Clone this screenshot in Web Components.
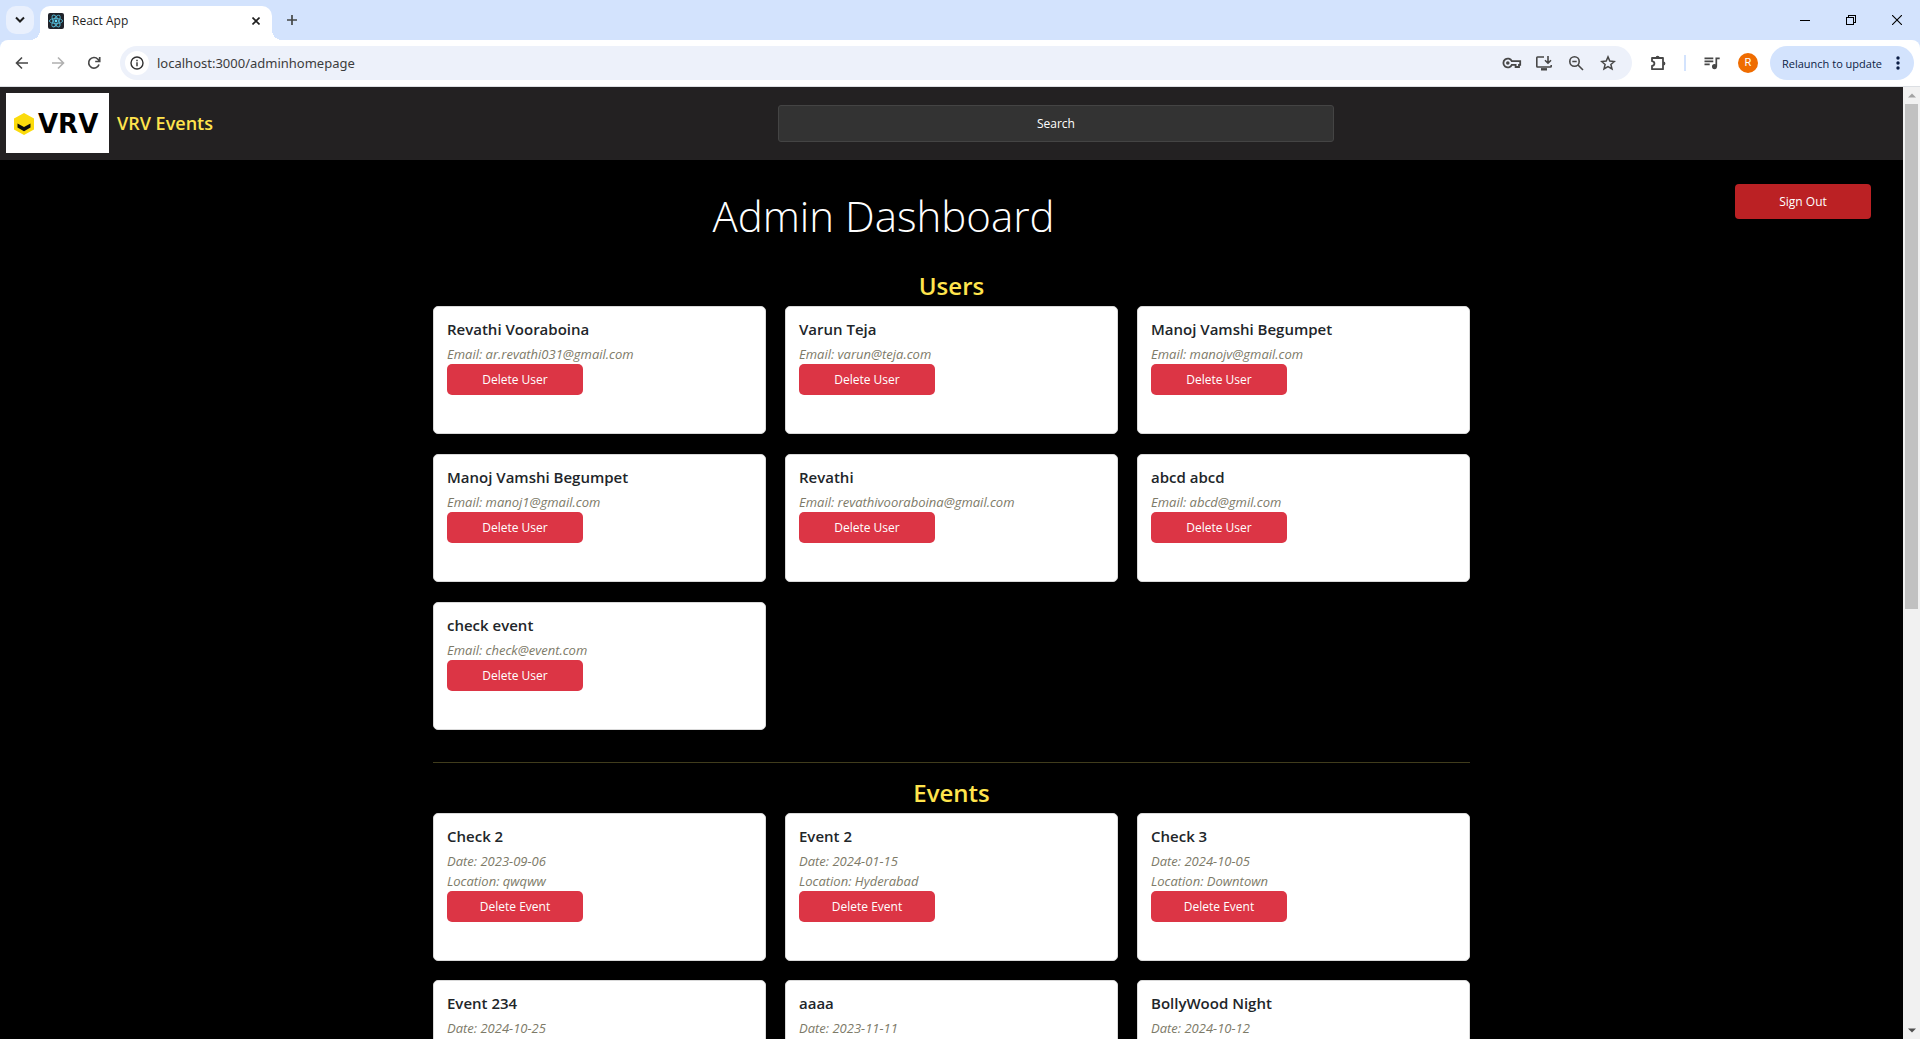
<!DOCTYPE html>
<html lang="en">
<head>
<meta charset="utf-8">
<title>React App</title>
<style>
  html, body { margin: 0; height: 100%; }
  body { font-family: "Open Sans", "Noto Sans", sans-serif; font-size: 12px; background: #000; }
</style>
</head>
<body>
<browser-window>
  <browser-tabs slot="chrome"></browser-tabs>
  <browser-toolbar slot="chrome"></browser-toolbar>
  <admin-page></admin-page>
</browser-window>

<script>
const define = (name, html, setup) => {
  const template = document.createElement('template');
  template.innerHTML = `<style>:host,*{box-sizing:border-box}button,input{font:inherit;margin:0}
    button{border:0;background:none;padding:0;color:inherit}svg{display:block}</style>` + html;
  customElements.define(name, class extends HTMLElement {
    connectedCallback() {
      if (this.shadowRoot) return;
      this.attachShadow({ mode: 'open' }).append(template.content.cloneNode(true));
      if (setup) setup(this, this.shadowRoot);
    }
  });
};

define('browser-window', `
<style>
  :host { display: flex; flex-direction: column; height: 100vh; overflow: hidden; background: #d3e3fd; }
  .view { flex: 1; min-height: 0; display: flex; }
  .page { flex: 1; min-width: 0; overflow-x: hidden; overflow-y: auto; scrollbar-width: none; }
</style>
<slot name="chrome"></slot>
<div class="view"><div class="page"><slot></slot></div><page-scrollbar></page-scrollbar></div>`);

define('page-scrollbar', `
<style>
  :host { display: flex; flex-direction: column; align-items: center; width: 17px; background: #f1f1f1; }
  .cap { height: 17px; display: grid; place-items: center; }
  .track { flex: 1; align-self: stretch; padding: 0 2px; }
  .thumb { height: 55%; background: #c1c1c1; }
</style>
<div class="cap"><svg width="8" height="5"><path d="M0 4.5 4 .5l4 4z" fill="#a3a3a3"/></svg></div>
<div class="track"><div class="thumb"></div></div>
<div class="cap"><svg width="8" height="5"><path d="M0 .5 4 4.5l4-4z" fill="#505050"/></svg></div>`);

define('browser-tabs', `
<style>
  :host { display: flex; align-items: flex-end; height: 40px; padding-left: 6px; color: #1f1f1f; }
  button { display: grid; place-items: center; }
  .list { width: 28px; height: 28px; border-radius: 10px; background: #e9f0fd; margin: 0 6px 6px 0; }
  .tab { position: relative; display: flex; align-items: center; gap: 8px; width: 232px; height: 34px; padding: 0 8px 4px;
         background: #fff; border-radius: 10px 10px 0 0; }
  .tab::before, .tab::after { content: ""; position: absolute; bottom: 0; width: 10px; height: 10px; }
  .tab::before { left: -10px; background: radial-gradient(circle at 0 0, transparent 10px, #fff 10px); }
  .tab::after { right: -10px; background: radial-gradient(circle at 100% 0, transparent 10px, #fff 10px); }
  .title { flex: 1; line-height: 16px; }
  .close { width: 16px; height: 16px; }
  .new { width: 28px; height: 28px; margin: 0 0 6px 6px; }
  .win { display: flex; margin-left: auto; height: 40px; }
  .win button { width: 46px; height: 40px; }
</style>
<button class="list" aria-label="Search tabs"><svg width="10" height="8" fill="none" stroke="#1f1f1f" stroke-width="2"><path d="M1 1.5l4 4 4-4"/></svg></button>
<div class="tab">
  <svg width="16" height="16"><rect width="16" height="16" rx="2" fill="#20232a"/>
    <g fill="none" stroke="#53b5d0" stroke-width=".9"><ellipse cx="8" cy="8" rx="6.6" ry="2.6"/><ellipse cx="8" cy="8" rx="6.6" ry="2.6" transform="rotate(60 8 8)"/><ellipse cx="8" cy="8" rx="6.6" ry="2.6" transform="rotate(120 8 8)"/></g><circle cx="8" cy="8" r="1.4" fill="#61dafb"/></svg>
  <span class="title">React App</span>
  <button class="close" aria-label="Close tab"><svg width="8" height="8" stroke="#1f1f1f" stroke-width="1.6"><path d="M.5.5l7 7M7.5.5l-7 7"/></svg></button>
</div>
<button class="new" aria-label="New tab"><svg width="10" height="10" stroke="#444746" stroke-width="1.7"><path d="M5 0v10M0 5h10"/></svg></button>
<div class="win">
  <button aria-label="Minimize"><svg width="10" height="10" shape-rendering="crispEdges"><path d="M0 5.5h10" stroke="#000"/></svg></button>
  <button aria-label="Restore"><svg width="10" height="10" fill="none" stroke="#000" shape-rendering="crispEdges"><path d="M.5 2.5h7v7h-7zM2.5 2.5v-2h7v7h-2"/></svg></button>
  <button aria-label="Close"><svg width="10" height="10" stroke="#000" stroke-width="1.1"><path d="M0 0l10 10M10 0L0 10"/></svg></button>
</div>`);

define('browser-toolbar', `
<style>
  :host { display: flex; align-items: center; gap: 12px; height: 47px; padding: 0 6px 0 8px; background: #fff;
          border-radius: 8px 8px 0 0; border-bottom: 1px solid #dcdfe3; color: #474747; }
  button { display: grid; place-items: center; }
  .nav { display: flex; gap: 8px; }
  .nav button, .tool { width: 28px; height: 28px; }
  .omni { flex: 1; display: flex; align-items: center; gap: 8px; height: 34px; padding: 0 12px 0 5px; border-radius: 17px; background: #edf1fa; }
  .omni button { width: 24px; height: 24px; }
  .info { border-radius: 12px; background: #fff; }
  input { flex: 1; min-width: 0; border: 0; padding: 0; outline: 0; background: none; font-family: "Noto Sans", sans-serif; font-size: 13px; line-height: 20px; color: #3c3c3c; }
  .rule { width: 2px; height: 16px; background: #d3e3fd; }
  .avatar { width: 20px; height: 20px; border-radius: 10px; background: #ef6c00; color: #fff; font: 11px/20px Roboto, sans-serif; }
  .relaunch { display: flex; align-items: center; justify-content: space-between; width: 144px; height: 34px; padding: 0 14px 0 12px; border-radius: 17px; background: #d3e3fd; color: #0b1d45; font-size: 11px; }
</style>
<div class="nav">
  <button aria-label="Back"><svg width="14" height="14" fill="none" stroke="#474747" stroke-width="1.6"><path d="M13 7H2M7 1.500L1.500 7 7 12.500"/></svg></button>
  <button aria-label="Forward"><svg width="14" height="14" fill="none" stroke="#b0b0b0" stroke-width="1.6"><path d="M1 7h11M7 1.500L12.500 7 7 12.500"/></svg></button>
  <button aria-label="Reload"><svg width="14" height="14" fill="none" stroke="#474747" stroke-width="1.7"><path d="M12 8.500A5.300 5.300 0 1 1 10.900 3.200L12.500 5M12.700 1v4.500H8.200"/></svg></button>
</div>
<div class="omni">
  <button class="info" aria-label="Site information"><svg width="14" height="14" fill="none" stroke="#303030" stroke-width="1.4"><circle cx="7" cy="7" r="6"/><path d="M7 6.200v4M7 3.700v1.500"/></svg></button>
  <input type="text" value="localhost:3000/adminhomepage" aria-label="Address">
  <button aria-label="Passwords"><svg width="20" height="14" fill="none" stroke="#474747" stroke-width="1.8"><path d="M9.800 5.200H18.200V8.800H17V11H13.600V8.800H9.800A4.400 4.400 0 1 1 9.800 5.200z"/><circle cx="5.800" cy="7" r="1.800" fill="#474747" stroke="none"/></svg></button>
  <button aria-label="Install"><svg width="18" height="16" fill="none" stroke="#474747" stroke-width="1.6"><path d="M9 2H2.500Q1.800 2 1.800 2.800V11.200Q1.800 12 2.500 12H15.500Q16.200 12 16.200 11.200V10M13 1V8M10 5.200L13 8.200 16 5.200"/><path d="M6 14.300h6" stroke-width="2.4"/></svg></button>
  <button aria-label="Zoom"><svg width="16" height="16" fill="none" stroke="#474747" stroke-width="1.6"><circle cx="6.500" cy="6.500" r="4.700"/><path d="M4.300 6.500h4.400M10 10l5 5"/></svg></button>
  <button aria-label="Bookmark"><svg width="16" height="16" fill="none" stroke="#474747" stroke-width="1.5"><path d="M8 1.900l1.800 4.200 4.600.4-3.500 3 1.100 4.500L8 11.600 4 14l1.100-4.500-3.500-3 4.600-.4z"/></svg></button>
</div>
<button class="tool" aria-label="Extensions"><svg width="18" height="18"><path d="M3 4H14V15.200H3V12Q5.400 11.600 5.400 9.600T3 7.200z" fill="none" stroke="#474747" stroke-width="1.800" stroke-linejoin="round"/><path d="M6.600 3.700a2 2 0 0 1 4 0zM14.400 7.600a2 2 0 0 1 0 4z" fill="#474747"/></svg></button>
<div class="rule"></div>
<button class="tool" aria-label="Media controls"><svg width="16" height="14" fill="none" stroke="#474747" stroke-width="1.700"><path d="M.5 2.300h8.800M.5 5.300h8.800M.5 8.300h5.200M12.300 10.500V2.300h3.400"/><circle cx="10.500" cy="10.600" r="1.700" fill="#474747"/></svg></button>
<button class="avatar">R</button>
<button class="relaunch"><span>Relaunch to update</span><svg width="4" height="14" fill="#0b1d45"><circle cx="2" cy="2" r="1.700"/><circle cx="2" cy="7" r="1.700"/><circle cx="2" cy="12" r="1.700"/></svg></button>`);

define('vrv-logo', `
<style>
  :host { display: flex; align-items: center; gap: 4px; width: 103px; height: 60px; padding: 2px 0 0 8px; background: #fff; }
  span { font: bold 26px/56px "DejaVu Sans", sans-serif; font-kerning: none; color: #000; }
</style>
<svg width="20" height="22" aria-hidden="true">
  <path d="M10 0L20 5.500V16.500L10 22 0 16.500V5.500z" fill="#fbdb0c"/>
  <path d="M3.500 10.500L10 14l6.500-3.500v4L10 18.300l-6.500-3.800z" fill="#0d0d0d"/>
</svg><span>VRV</span>`);

define('site-header', `
<style>
  :host { display: flex; align-items: center; gap: 8px; padding: 6px 12px 7px 6px; background: #232122; }
  a { color: #ffe44d; font-size: 18px; line-height: 24px; font-weight: 600; text-decoration: none; }
  form { flex: 1; display: flex; justify-content: center; margin: 0; }
  input { width: 33.333%; height: 37px; padding: 0 10px; border: 1px solid #444; border-radius: 3px; background: #333; color: #fff; text-align: center; font-size: 12px; }
  input::placeholder { color: #fff; }
</style>
<vrv-logo></vrv-logo><a href="#">VRV Events</a>
<form><input type="text" placeholder="Search" aria-label="Search"></form>`);

define('entry-card', `
<style>
  :host { display: block; padding: 12px 13px 38px; background: #fff; border: 1px solid #d9d9d9; border-radius: 5px; }
  h3 { margin: 0 0 5px; font-size: 15px; line-height: 20px; font-weight: 600; color: #212529; }
  .info { min-height: var(--info-height, 20px); font-size: 13px; line-height: 20px; font-style: italic; color: #7d7a68; }
  button { display: block; width: 136px; height: 31px; border-radius: 5px; background: #dc3545; color: #fff; font-size: 12px; }
</style>
<h3></h3><div class="info"><slot></slot></div><button type="button"></button>`,
(el, root) => {
  root.querySelector('h3').textContent = el.getAttribute('heading');
  root.querySelector('button').textContent = el.getAttribute('action');
});

define('card-section', `
<style>
  :host { display: block; }
  h2 { margin: 0; padding-bottom: 4px; font-size: 24px; line-height: 32px; font-weight: 600; text-align: center; color: #ffe44d; }
  .grid { display: grid; grid-template-columns: repeat(3, 1fr); gap: var(--row-gap, 20px) 19px; }
</style>
<h2></h2><div class="grid"><slot></slot></div>`,
(el, root) => { root.querySelector('h2').textContent = el.getAttribute('heading'); });

define('admin-page', `
<style>
  :host { display: block; background: #000; }
  .top { display: flex; align-items: flex-start; padding: 24px 32px 0; }
  h1 { flex: 1; margin: 0; font-size: 42px; line-height: 64px; font-weight: 300; text-align: center; color: #fff; }
  .out { width: 136px; height: 35px; border-radius: 4px; background: #bb2124; color: #fff; font-size: 12px; }
  main { max-width: 1037px; margin: 0 auto; padding-top: 22px; }
  hr { margin: 32px 0 14px; border: 0; border-top: 1px solid #403c1c; }
  .events { --row-gap: 19px; --info-height: 40px; }
  p { margin: 0; }
</style>
<site-header></site-header>
<div class="top"><h1>Admin Dashboard</h1><button class="out" type="button">Sign Out</button></div>
<main>
  <card-section heading="Users">
    <entry-card heading="Revathi Vooraboina" action="Delete User"><p>Email: ar.revathi031@gmail.com</p></entry-card>
    <entry-card heading="Varun Teja" action="Delete User"><p>Email: varun@teja.com</p></entry-card>
    <entry-card heading="Manoj Vamshi Begumpet" action="Delete User"><p>Email: manojv@gmail.com</p></entry-card>
    <entry-card heading="Manoj Vamshi Begumpet" action="Delete User"><p>Email: manoj1@gmail.com</p></entry-card>
    <entry-card heading="Revathi" action="Delete User"><p>Email: revathivooraboina@gmail.com</p></entry-card>
    <entry-card heading="abcd abcd" action="Delete User"><p>Email: abcd@gmil.com</p></entry-card>
    <entry-card heading="check event" action="Delete User"><p>Email: check@event.com</p></entry-card>
  </card-section>
  <hr>
  <card-section class="events" heading="Events">
    <entry-card heading="Check 2" action="Delete Event"><p>Date: 2023-09-06</p><p>Location: qwqww</p></entry-card>
    <entry-card heading="Event 2" action="Delete Event"><p>Date: 2024-01-15</p><p>Location: Hyderabad</p></entry-card>
    <entry-card heading="Check 3" action="Delete Event"><p>Date: 2024-10-05</p><p>Location: Downtown</p></entry-card>
    <entry-card heading="Event 234" action="Delete Event"><p>Date: 2024-10-25</p></entry-card>
    <entry-card heading="aaaa" action="Delete Event"><p>Date: 2023-11-11</p></entry-card>
    <entry-card heading="BollyWood Night" action="Delete Event"><p>Date: 2024-10-12</p></entry-card>
  </card-section>
</main>`);
</script>
</body>
</html>
